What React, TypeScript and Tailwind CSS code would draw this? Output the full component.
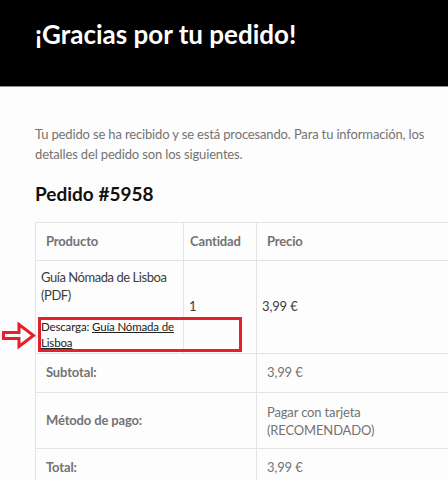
export default function App() {
  const cell = 'border border-[#e4e4e4] text-left align-middle';
  return (
    <div className="relative h-[480px] w-[448px] overflow-hidden bg-[#fdfdfd] font-['Lato',sans-serif] tracking-[-0.15px] text-[#737373]">
      <header className="h-[87px] border-b border-[#8c8c8c] bg-black px-[35px] pt-[17px]">
        <h1 className="text-[26px] font-bold leading-[34px] tracking-normal text-white">¡Gracias por tu pedido!</h1>
      </header>

      <main className="pl-[35px] pr-[2px] pt-[37px]">
        <p className="text-[13px] leading-[20px]">
          Tu pedido se ha recibido y se está procesando. Para tu información, los detalles del pedido son los
          siguientes.
        </p>
        <h2 className="mt-[17px] text-[19px] font-bold leading-[26px] tracking-normal text-[#111]">Pedido #5958</h2>

        <table className="mt-[15px] w-[460px] table-fixed border-collapse text-[13px]">
          <colgroup>
            <col className="w-[148px]" />
            <col className="w-[73px]" />
            <col />
          </colgroup>
          <thead>
            <tr className="h-[38px]">
              <th className={cell + ' px-[10px] font-bold'}>Producto</th>
              <th className={cell + ' px-[6px] font-bold'}>Cantidad</th>
              <th className={cell + ' px-[10px] font-bold'}>Precio</th>
            </tr>
          </thead>
          <tbody className="text-[#3c3c3c]">
            <tr className="h-[93px]">
              <td className="border border-[#e4e4e4] pb-[2px] pl-[5px] pr-0 pt-[7px] text-left align-top">
                <div className="leading-[18px] tracking-[-0.45px]">Guía Nómada de Lisboa (PDF)</div>
                <div className="mt-[15px] text-[11.5px] leading-[16px] tracking-[-0.15px] text-[#222]">
                  <span>Descarga: </span>
                  <span className="underline">Guía Nómada de</span>
                  <br />
                  <span className="underline">Lisboa</span>
                </div>
              </td>
              <td className={cell + ' px-[5px]'}>1</td>
              <td className={cell + ' px-[5px]'}>3,99 €</td>
            </tr>
            <tr className="h-[39px] text-[#737373]">
              <th colSpan={2} className={cell + ' px-[10px] font-bold'}>Subtotal:</th>
              <td className={cell + ' px-[10px]'}>3,99 €</td>
            </tr>
            <tr className="h-[56px] text-[#737373]">
              <th colSpan={2} className={cell + ' px-[10px] font-bold'}>Método de pago:</th>
              <td className={cell + ' px-[10px] leading-[18px]'}>Pagar con tarjeta<br />(RECOMENDADO)</td>
            </tr>
            <tr className="h-[39px] text-[#737373]">
              <th colSpan={2} className={cell + ' px-[10px] font-bold'}>Total:</th>
              <td className={cell + ' px-[10px]'}>3,99 €</td>
            </tr>
          </tbody>
        </table>
      </main>

      {/* annotation */}
      <div className="absolute left-[38px] top-[317px] h-[35px] w-[204px] border-[3px] border-[#e3202b]" />
      <svg className="absolute left-0 top-[321px]" width="38" height="30" viewBox="0 0 38 30">
        <path
          d="M3.5 11.5 H19 V3.5 L33.5 14.5 L19 25.5 V17.5 H3.5 Z"
          fill="none"
          stroke="#e3202b"
          strokeWidth="3"
          strokeLinejoin="miter"
        />
      </svg>
    </div>
  );
}
